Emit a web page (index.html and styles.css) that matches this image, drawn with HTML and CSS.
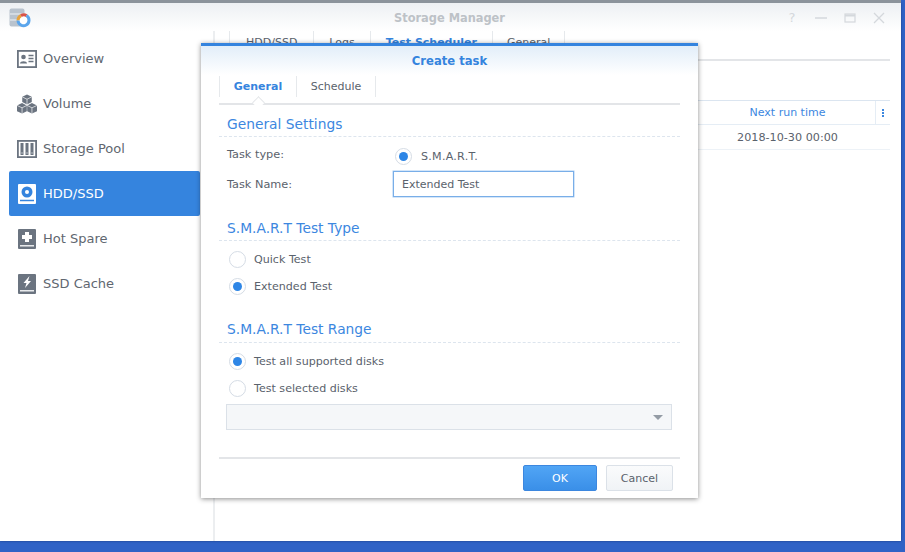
FILE: index.html
```html
<!DOCTYPE html>
<html lang="en">
<head>
<meta charset="utf-8">
<title>Storage Manager</title>
<link rel="stylesheet" href="styles.css">
</head>
<body>
<div class="window">
  <header class="titlebar">
    <svg class="app-icon" viewBox="0 0 22 20" width="22" height="20">
      <rect x="0.500" y="0.500" width="15" height="18" rx="2" fill="#b9c3ce"/>
      <path d="M1 6h14M1 12h14" stroke="#eef2f5" stroke-width="1"/>
      <circle cx="14.500" cy="12.500" r="5.500" fill="#fff"/>
      <path d="M9 12.500a5.500 5.500 0 0 1 3-4.900" fill="none" stroke="#e8a33c" stroke-width="3"/>
      <path d="M12 7.600a5.500 5.500 0 0 1 5.500 0" fill="none" stroke="#d9544a" stroke-width="3"/>
      <path d="M17.500 7.600a5.500 5.500 0 1 1-8.500 4.900" fill="none" stroke="#5aa5ec" stroke-width="3"/>
    </svg>
    <div class="title">Storage Manager</div>
    <div class="winctl">
      <span class="help">?</span>
      <svg viewBox="0 0 12 12" width="12" height="12"><path d="M0 6h12" stroke="#d4d8dc" stroke-width="1.500"/></svg>
      <svg viewBox="0 0 12 12" width="12" height="12"><rect x="1" y="2" width="10" height="8" fill="none" stroke="#d4d8dc" stroke-width="1.200"/><path d="M1 3.500h10" stroke="#d4d8dc" stroke-width="2"/></svg>
      <svg viewBox="0 0 12 12" width="12" height="12"><path d="M1 1l10 10M11 1L1 11" stroke="#d4d8dc" stroke-width="1.300"/></svg>
    </div>
  </header>
  <div class="body">
    <nav class="sidebar">
      <a class="nav-item">
        <svg viewBox="0 0 20 18" width="20" height="18"><rect x="0.900" y="0.900" width="18.200" height="16.200" fill="none" stroke="#6b7480" stroke-width="1.800"/><circle cx="6.500" cy="7" r="2.300" fill="#6b7480"/><path d="M3 13.500c0-3 7-3 7 0z" fill="#6b7480"/><path d="M11.500 5.500h5M11.500 8.500h5M11.500 11.500h5" stroke="#6b7480" stroke-width="1.400"/></svg>
        <span>Overview</span>
      </a>
      <a class="nav-item">
        <svg viewBox="0 0 21 20" width="20" height="20"><g fill="#6b7480"><path d="M10.500 0l5 2.500v5.500l-5 2.500-5-2.500V2.500z"/><path d="M5.300 9l5 2.500v6l-5 2.500-5.300-2.500v-6z"/><path d="M15.700 9l5.300 2.500v6l-5.300 2.500-5-2.500v-6z"/></g><path d="M5.500 2.500l5 2.500 5-2.500M10.500 5v5.500M0 11.500l5.300 2.500 5-2.500M5.300 14v6M10.700 11.500l5 2.500 5.300-2.500M15.700 14v6" fill="none" stroke="#fff" stroke-width=".7"/></svg>
        <span>Volume</span>
      </a>
      <a class="nav-item">
        <svg viewBox="0 0 20 18" width="20" height="18"><rect x="0.900" y="0.900" width="18.200" height="16.200" fill="none" stroke="#6b7480" stroke-width="1.800"/><g fill="#6b7480"><rect x="3.500" y="3" width="3" height="12"/><rect x="8.500" y="3" width="3" height="12"/><rect x="13.500" y="3" width="3" height="12"/></g><path d="M5 12.500v1M10 12.500v1M15 12.500v1" stroke="#fff" stroke-width="1"/></svg>
        <span>Storage Pool</span>
      </a>
      <a class="nav-item active">
        <svg viewBox="0 0 18 20" width="18" height="20"><rect width="18" height="20" rx="1" fill="#fff"/><circle cx="9" cy="8" r="5.500" fill="#3584de"/><circle cx="9" cy="8" r="2" fill="#fff"/><path d="M2 16.500h14" stroke="#3584de" stroke-width="1.500"/></svg>
        <span>HDD/SSD</span>
      </a>
      <a class="nav-item">
        <svg viewBox="0 0 18 20" width="18" height="20"><rect width="18" height="20" rx="1" fill="#6b7480"/><path d="M7 3h4v3h3v4h-3v3H7v-3H4V6h3z" fill="#fff"/><path d="M2 16.800h14" stroke="#fff" stroke-width="1.300"/></svg>
        <span>Hot Spare</span>
      </a>
      <a class="nav-item">
        <svg viewBox="0 0 18 20" width="18" height="20"><rect width="18" height="20" rx="1" fill="#6b7480"/><path d="M11.500 2L5.500 9h3l-1.500 5 6-7h-3z" fill="#fff"/><path d="M2 16.800h14" stroke="#fff" stroke-width="1.300"/></svg>
        <span>SSD Cache</span>
      </a>
    </nav>
    <main class="content">
      <div class="tabs">
        <span class="tab tab-a">HDD/SSD</span>
        <span class="tab">Logs</span>
        <span class="tab tab-on">Test Scheduler</span>
        <span class="tab tab-d">General</span>
      </div>
      <div class="table">
        <div class="thead"><span class="col-time col-head">Next run time</span><span class="col-more"><i></i><i></i><i></i></span></div>
        <div class="trow"><span class="col-time">2018-10-30 00:00</span></div>
      </div>
    </main>
  </div>
</div>

<section class="dialog">
  <div class="dlg-title">Create task</div>
  <div class="dlg-tabs">
    <span class="dlg-tab dlg-tab-on">General</span>
    <span class="dlg-tab">Schedule</span>
  </div>
  <div class="dlg-body">
    <h2 class="sec sec-first">General Settings</h2>
    <div class="form-row row-type">
      <span class="lbl">Task type:</span>
      <label class="radio radio-type"><span class="dot on"></span>S.M.A.R.T.</label>
    </div>
    <div class="form-row row-name">
      <span class="lbl">Task Name:</span>
      <div class="input">Extended Test</div>
    </div>
    <h2 class="sec sec-type">S.M.A.R.T Test Type</h2>
    <div class="opts">
      <label class="radio"><span class="dot"></span>Quick Test</label>
      <label class="radio"><span class="dot on"></span>Extended Test</label>
    </div>
    <h2 class="sec sec-range">S.M.A.R.T Test Range</h2>
    <div class="opts">
      <label class="radio"><span class="dot on"></span>Test all supported disks</label>
      <label class="radio"><span class="dot"></span>Test selected disks</label>
    </div>
    <div class="select"><span class="caret"></span></div>
  </div>
  <div class="dlg-foot">
    <button class="btn btn-ok">OK</button>
    <button class="btn btn-cancel">Cancel</button>
  </div>
</section>
</body>
</html>
```
FILE: styles.css
```css
* { box-sizing: border-box; }
html, body { margin: 0; height: 100%; }
body {
  width: 905px; height: 552px; overflow: hidden; position: relative;
  background: #2f62c6;
  padding: 3px 4px 11px 0;
  font-family: "DejaVu Sans", Verdana, sans-serif;
  color: #5a626c;
}
.window {
  height: 538px; background: #fff; display: flex; flex-direction: column;
  box-shadow: 0 0 2px rgba(10, 30, 70, .6);
}
body::before {
  content: ""; position: absolute; left: 0; right: 4px; top: 0; height: 3px; background: #8b939b;
}
.titlebar {
  height: 28px; flex: none; display: flex; align-items: center; position: relative;
  background: linear-gradient(#edf0f3, #fff);
  padding: 2px 16px 0 9px;
}
.app-icon { flex: none; }
.title {
  position: absolute; left: 0; right: 2px; top: 8px; text-align: center;
  font-size: 11.400px; font-weight: 700; color: #bdc2c7; line-height: 14px;
}
.winctl { margin-left: auto; display: flex; gap: 17px; align-items: center; }
.help { font-size: 13px; width: 12px; line-height: 12px; color: #d4d8dc; text-align: center; }
.body { flex: 1; display: flex; min-height: 0; }
.sidebar {
  width: 215px; flex: none; padding: 5px 14px 0 9px;
  border-right: 2px solid #eceef0;
  display: flex; flex-direction: column;
}
.nav-item {
  height: 45px; display: flex; align-items: center; padding-left: 8px; gap: 6px;
  font-size: 13px; color: #5f6770;
}
.nav-item svg { flex: none; width: 20px; }
.nav-item.active {
  background: #3584de; color: #fff; border-radius: 2px; margin-right: -1px;
}
.content { flex: 1; padding: 0 11px 0 14px; position: relative; }
.tabs {
  height: 30px; border-bottom: 2px solid #e3e5e8; display: flex;
}
.tab {
  height: 28px; padding: 5px 15px 0; font-size: 11px; color: #5a626c;
  border-left: 1px solid #e6e9ec; line-height: 14px;
}
.tab-a { padding: 5px 16px 0; }
.tab-d { padding: 5px 14px 0; border-right: 1px solid #e6e9ec; }
.tab-on { color: #3584de; font-weight: 700; }
.table { margin-top: 39px; }
.thead {
  height: 25px; display: flex; align-items: center;
  border-top: 1px solid #dbe5f0; border-bottom: 1px solid #e5edf5;
  justify-content: flex-end;
}
.trow {
  height: 25px; display: flex; align-items: center; justify-content: flex-end;
  border-bottom: 1px solid #edf2f7; padding-right: 15px;
}
.col-time { width: 175px; text-align: center; font-size: 11.200px; color: #5a626c; }
.col-head { color: #3c87df; font-size: 11px; }
.col-more {
  width: 15px; height: 24px; border-left: 1px solid #e5edf5;
  display: flex; flex-direction: column; align-items: center; justify-content: center; gap: 1px;
}
.col-more i { width: 2px; height: 2px; background: #3c87df; }

.dialog {
  position: absolute; left: 201px; top: 43px; width: 497px; height: 455px;
  background: #fff; border-top: 3px solid #3584de;
  box-shadow: 0 1px 5px rgba(0, 0, 0, .45);
  display: flex; flex-direction: column;
}
.dlg-title {
  height: 29px; flex: none; text-align: center; padding-top: 8px; line-height: 14px;
  font-size: 11.600px; font-weight: 700; color: #3584de;
  background: linear-gradient(#e2eef9, #fff);
}
.dlg-tabs {
  height: 29px; margin: 1px 18px 0; flex: none; display: flex;
  border-bottom: 2px solid #e3e5e8; position: relative;
}
.dlg-tab {
  height: 21px; width: 77px; border-left: 1px solid #e6e9ec; font-size: 11px; line-height: 21px;
  text-align: center;
}
.dlg-tab + .dlg-tab { width: 80px; border-right: 1px solid #e6e9ec; }
.dlg-tab-on { color: #3584de; font-weight: 700; position: relative; }
.dlg-tab-on::after {
  content: ""; position: absolute; left: 34px; top: 22px; width: 8px; height: 8px;
  background: #fff; border-left: 1px solid #e3e5e8; border-top: 1px solid #e3e5e8;
  transform: rotate(45deg);
}
.dlg-body { flex: 1; padding: 0 18px; }
.sec {
  margin: 0; font-weight: 400; font-size: 13.800px; color: #3c87df; height: 24px; line-height: 22px;
  padding-left: 8px; border-bottom: 1px dashed #dde5ee;
}
.sec-first { margin-top: 8px; }
.sec-type { margin-top: 18px; }
.sec-range { margin-top: 19px; line-height: 20px; }
.form-row { display: flex; align-items: center; padding-left: 8px; font-size: 11.300px; height: 30px; }
.lbl { width: 166px; flex: none; }
.row-type { margin-top: 2px; }
.input {
  width: 181px; height: 26px; border: 1px solid #79aee8; padding-left: 8px; line-height: 26px; font-size: 11px;
  box-shadow: 0 0 0 .5px #a9cdf2;
}
.radio { display: flex; align-items: center; font-size: 11.100px; gap: 8px; height: 27px; }
.radio-type { margin: 4px 0 0 2px; gap: 9px; letter-spacing: .25px; }
.dot {
  width: 17px; height: 17px; border-radius: 50%; border: 1px solid #d5dce5; background: #fff;
  flex: none; display: flex; align-items: center; justify-content: center;
}
.dot.on::after { content: ""; width: 9px; height: 9px; border-radius: 50%; background: #2e86e6; }
.opts { padding: 5px 0 0 10px; }
.select {
  margin: 2px 8px 0 7px; height: 26px; background: #f5f7f9; border: 1px solid #dbe1e8; position: relative;
}
.caret {
  position: absolute; right: 8px; top: 10px; width: 0; height: 0;
  border-left: 5px solid transparent; border-right: 5px solid transparent; border-top: 5px solid #949ca5;
}
.dlg-foot {
  height: 41px; margin: 0 18px; flex: none; border-top: 2px solid #e3e5e8;
  display: flex; justify-content: flex-end; align-items: flex-start; gap: 9px; padding: 6px 7px 0 0;
}
.btn {
  height: 26px; font-family: inherit; font-size: 11px; border-radius: 2px; padding: 0;
}
.btn-ok { width: 74px; border: 1px solid #3c87df; background: linear-gradient(#51a5f5, #3a8fe8); color: #fff; }
.btn-cancel { width: 67px; border: 1px solid #dbe1e8; background: linear-gradient(#fafbfc, #f0f3f6); color: #5a626c; }
```
